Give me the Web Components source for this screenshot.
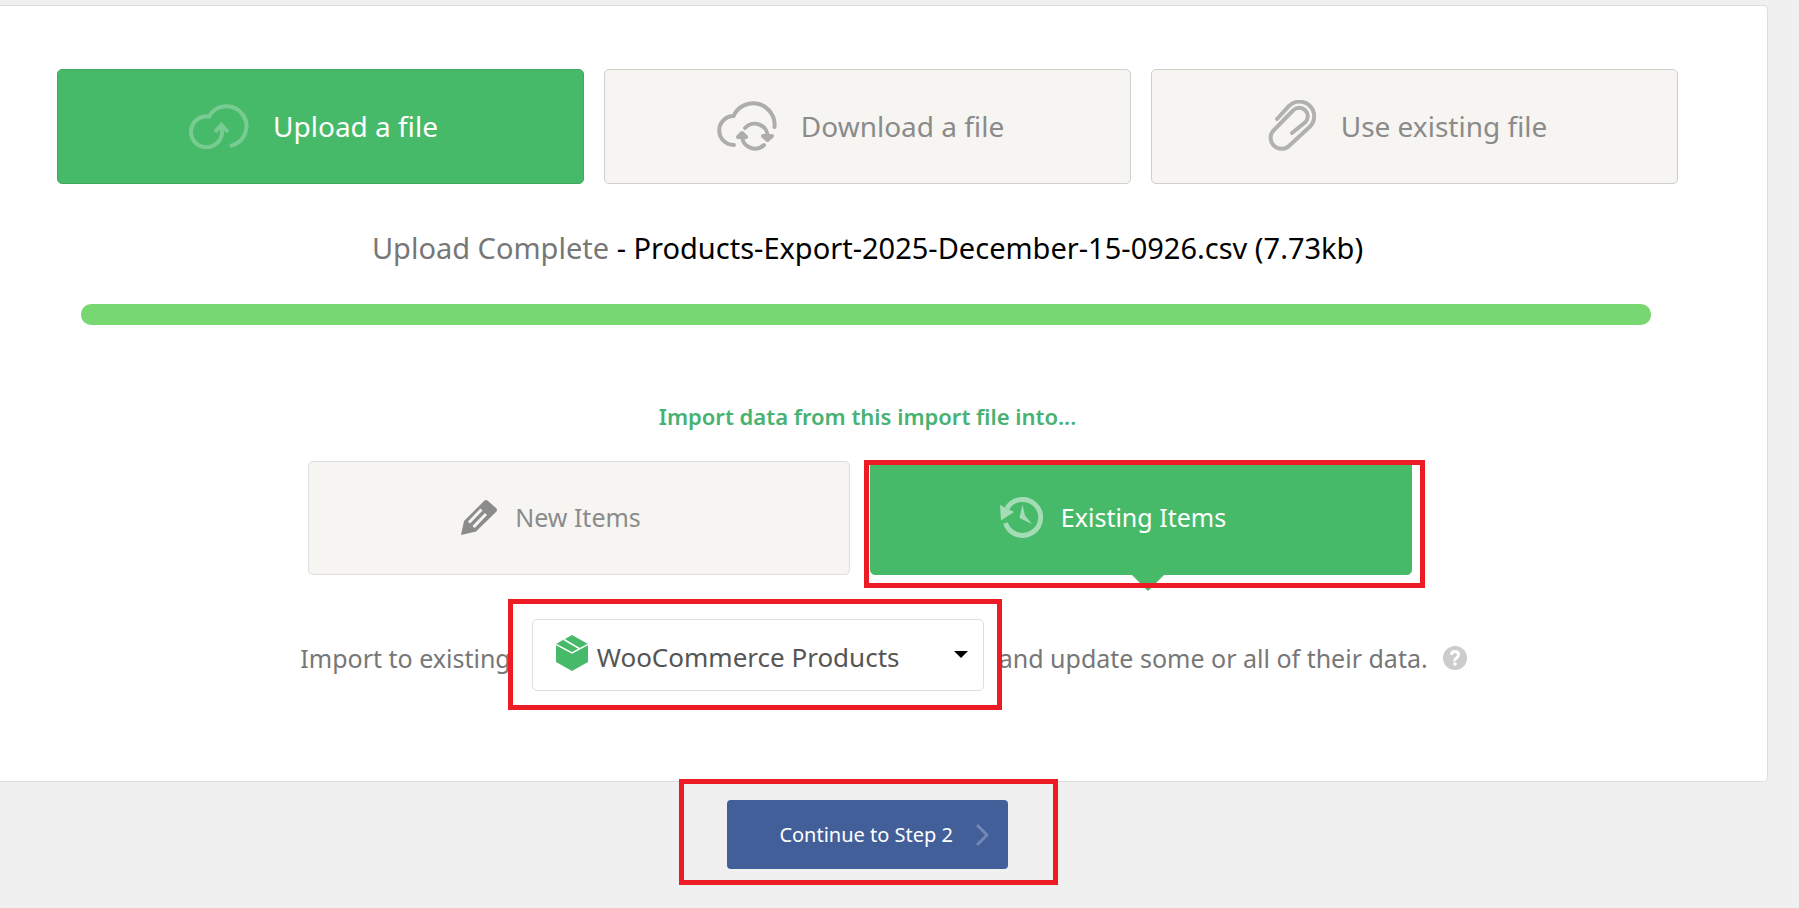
<!DOCTYPE html>
<html lang="en">
<head>
<meta charset="utf-8">
<title>Import a file</title>
<style>
body {
  margin: 0;
  background: #f0f0f0;
  color: #777;
  font-family: "Segoe UI", "Noto Sans", "Open Sans", sans-serif;
}
</style>
</head>
<body>
<import-page></import-page>

<script>
const icons = {
  upload: `<svg width="60" height="46" viewBox="0 0 60 46" fill="none" stroke="#78cc92" stroke-width="4">
    <path d="M33 22V28A15.5 15.5 0 1 1 20 13.5A20 20 0 1 1 41 43"/><path d="M26 29L32.5 22L39 29"/></svg>`,
  download: `<svg width="60" height="52" viewBox="0 0 60 52" fill="none" stroke="#adadad" stroke-width="4">
    <path d="M17 45A14.5 14.5 0 1 1 16.5 16A21.5 21.5 0 0 1 57.500 27" stroke-linecap="round"/>
    <path d="M28 28A13 13 0 0 1 50.7 37M25 36A13 13 0 0 0 47 45" stroke-linecap="round"/>
    <path d="M46 36H55L50.5 40ZM21 37L25 33L29 37Z" fill="#adadad" stroke-linejoin="round"/></svg>`,
  clip: `<svg width="49" height="52" viewBox="0 0 49 52" fill="none" stroke="#b1b1b1" stroke-width="4">
    <path d="M9 19L21 6A14.5 14.5 0 0 1 42 26.5L21 46A11 11 0 0 1 5 31L25 10.5A8 8 0 0 1 37.5 22L24 33" stroke-linecap="round"/></svg>`,
  pencil: `<svg width="36" height="36" viewBox="0 0 36 36">
    <path d="M0 36L3 22L23 2Q25 0 27 2L35 9Q37 11 35 13L15 32.500Z" fill="#8b8b8b"/>
    <path d="M8 23.500L20.500 10.500M12.500 28L25 15" stroke="#f6f5f1" stroke-width="3"/></svg>`,
  history: `<svg width="43" height="42" viewBox="0 0 43 42">
    <path d="M5.500 27A18 18 0 1 0 7 12.500" fill="none" stroke="#a3dcb5" stroke-width="5"/>
    <path d="M0 9L1 24.500L14 16ZM22.500 8.500L19.500 22L32 28L25 19.500Z" fill="#a3dcb5"/></svg>`,
  box: `<svg width="32" height="36" viewBox="0 0 32 36">
    <path d="M16 0L32 9V27L16 36L0 27V9Z" fill="#47ba69"/>
    <path d="M0 9.500L16 18L32 9.500M8 4.500L24 14" fill="none" stroke="#fff" stroke-width="1.500"/></svg>`,
  help: `<svg width="24" height="24" viewBox="0 0 24 24">
    <circle cx="12" cy="12" r="12" fill="#ccc"/>
    <path d="M8.500 9Q8.500 5.500 12 5.500T15.500 9Q15.500 10.500 13.500 12T12 15" fill="none" stroke="#fff" stroke-width="3"/>
    <circle cx="12" cy="18" r="1.800" fill="#fff"/></svg>`,
  caret: `<svg width="14" height="12" viewBox="0 -4 14 12"><path d="M0 0H14L7 7Z" fill="#000"/></svg>`,
  chevron: `<svg width="13" height="22" viewBox="0 0 13 22"><path d="M1 1L11 11L1 21" fill="none" stroke="#7388b6" stroke-width="3"/></svg>`
};

class ImportIcon extends HTMLElement {
  connectedCallback() {
    this.attachShadow({ mode: "open" });
    this.shadowRoot.innerHTML = `
      <style>
        :host { display: block; flex: none; }
        svg { display: block; }
      </style>
      ${icons[this.getAttribute("name")]}`;
  }
}

// Red frame drawn over whatever it wraps, --frame is its inset
class HighlightFrame extends HTMLElement {
  constructor() {
    super();
    this.attachShadow({ mode: "open" });
    this.shadowRoot.innerHTML = `
      <style>
        :host { display: block; position: relative; }
        :host::after {
          content: "";
          position: absolute;
          inset: var(--frame, 0);
          border: 5px solid #ed1c24;
          pointer-events: none;
        }
      </style>
      <slot></slot>`;
  }
}

class ChoiceCard extends HTMLElement {
  constructor() {
    super();
    this.attachShadow({ mode: "open" });
    this.shadowRoot.innerHTML = `
      <style>
        :host { display: block; flex: 1; }
        button {
          display: flex;
          align-items: center;
          justify-content: center;
          position: relative;
          gap: 24px;
          box-sizing: border-box;
          width: 100%;
          height: 115px;
          padding: 0 14px 2px 0;
          border: 1px solid #cfcfcb;
          border-radius: 5px;
          background: #f6f5f1;
          color: #8b8b8b;
          font: 28px/40px "Segoe UI", "Noto Sans", "Open Sans", sans-serif;
          white-space: nowrap;
        }
        :host([small]) button {
          gap: 18px;
          height: 114px;
          padding-right: 56px;
          border-color: #dedede;
          font-size: 25px;
        }
        :host([active]) button {
          border-color: #40a85f;
          background: #47ba69;
          color: #fff;
        }
        :host([small][active]) button { border-color: #47ba69; }
        :host([small][active]) button::after {
          content: "";
          position: absolute;
          top: 100%;
          left: 50%;
          margin-left: -10px;
          border: 17px solid transparent;
          border-top-color: #47ba69;
          border-bottom: 0;
        }
      </style>
      <button type="button"><import-icon name="${this.getAttribute("icon")}"></import-icon><slot></slot></button>`;
  }
}

class UploadStatus extends HTMLElement {
  constructor() {
    super();
    this.attachShadow({ mode: "open" });
    this.shadowRoot.innerHTML = `
      <style>
        :host { display: block; text-align: center; }
        label { display: block; font-size: 29px; line-height: 40px; }
        span { color: #000; }
        progress {
          display: block;
          appearance: none;
          box-sizing: border-box;
          width: calc(100% - 51px);
          height: 21px;
          margin: 36px 27px 0 24px;
          border: 0;
          border-radius: 10px;
          overflow: hidden;
        }
        progress::-webkit-progress-bar { background: #eee; }
        progress::-webkit-progress-value { background: #77d871; }
      </style>
      <label for="bar">Upload Complete <span>- <slot></slot></span></label>
      <progress id="bar" max="100" value="100"></progress>`;
  }
}

class TypeSelect extends HTMLElement {
  constructor() {
    super();
    this.attachShadow({ mode: "open" });
    this.shadowRoot.innerHTML = `
      <style>
        :host {
          display: flex;
          align-items: center;
          gap: 9px;
          box-sizing: border-box;
          width: 452px;
          height: 72px;
          padding: 0 15px 4px 23px;
          border: 1px solid #dedede;
          border-radius: 5px;
          background: #fff;
        }
        select {
          flex: 1;
          min-width: 0;
          appearance: none;
          height: 40px;
          margin-top: 8px;
          padding: 0;
          border: 0;
          background: none;
          color: #555;
          font: 26px/40px "Segoe UI", "Noto Sans", "Open Sans", sans-serif;
        }
      </style>
      <import-icon name="box"></import-icon>
      <select aria-label="Import to existing"><option>WooCommerce Products</option></select>
      <import-icon name="caret"></import-icon>`;
  }
}

class ContinueButton extends HTMLElement {
  constructor() {
    super();
    this.attachShadow({ mode: "open" });
    this.shadowRoot.innerHTML = `
      <style>
        button {
          display: flex;
          align-items: center;
          justify-content: flex-end;
          gap: 23px;
          width: 281px;
          height: 69px;
          padding: 0 19px 0 0;
          border: 0;
          border-radius: 4px;
          background: #435f9a;
          color: #fff;
          font: 20px/28px "Segoe UI", "Noto Sans", "Open Sans", sans-serif;
        }
      </style>
      <button type="button"><slot></slot><import-icon name="chevron"></import-icon></button>`;
  }
}

class ImportPage extends HTMLElement {
  constructor() {
    super();
    this.attachShadow({ mode: "open" });
    this.shadowRoot.innerHTML = `
      <style>
        :host { display: block; padding-top: 5px; }
        main {
          margin-right: 31px;
          padding: 63px 89px 90px 57px;
          border: 1px solid #ddd;
          border-left: 0;
          border-radius: 0 5px 5px 0;
          background: #fff;
        }
        .cards { display: flex; gap: 20px; }
        upload-status { margin-top: 44px; }
        h2 {
          margin: 75px 0 29px;
          color: #48b272;
          font-size: 22px;
          font-weight: 600;
          line-height: 32px;
          text-align: center;
        }
        .types { max-width: 1104px; margin: 0 auto; padding-right: 15px; }
        .types > * { flex: 1; }
        .existing { --frame: -1px -13px -13px -6px; }
        .target {
          display: flex;
          align-items: center;
          justify-content: center;
          margin-top: 44px;
          padding-left: 32px;
          font-size: 25px;
          line-height: 40px;
          white-space: nowrap;
        }
        .target > :not(.picker) { margin-top: 6px; }
        .picker { --frame: -20px -18px -19px -24px; margin: 0 15px 0 21px; }
        .help { margin-left: 15px; padding: 0; border: 0; background: none; }
        footer { display: flex; justify-content: center; margin-top: 18px; padding: 0 121px 32px 57px; }
        .next { --frame: -21px -50px -16px -48px; }
      </style>
      <main>
        <div class="cards">
          <choice-card icon="upload" active>Upload a file</choice-card>
          <choice-card icon="download">Download a file</choice-card>
          <choice-card icon="clip">Use existing file</choice-card>
        </div>
        <upload-status>Products-Export-2025-December-15-0926.csv (7.73kb)</upload-status>
        <h2>Import data from this import file into...</h2>
        <div class="cards types">
          <choice-card icon="pencil" small>New Items</choice-card>
          <highlight-frame class="existing">
            <choice-card icon="history" small active>Existing Items</choice-card>
          </highlight-frame>
        </div>
        <div class="target">
          <span>Import to existing</span>
          <highlight-frame class="picker"><type-select></type-select></highlight-frame>
          <span>and update some or all of their data.</span>
          <button class="help" type="button" aria-label="Help"><import-icon name="help"></import-icon></button>
        </div>
      </main>
      <footer>
        <highlight-frame class="next"><continue-button>Continue to Step 2</continue-button></highlight-frame>
      </footer>`;
  }
}

customElements.define("import-icon", ImportIcon);
customElements.define("highlight-frame", HighlightFrame);
customElements.define("choice-card", ChoiceCard);
customElements.define("upload-status", UploadStatus);
customElements.define("type-select", TypeSelect);
customElements.define("continue-button", ContinueButton);
customElements.define("import-page", ImportPage);
</script>
</body>
</html>
